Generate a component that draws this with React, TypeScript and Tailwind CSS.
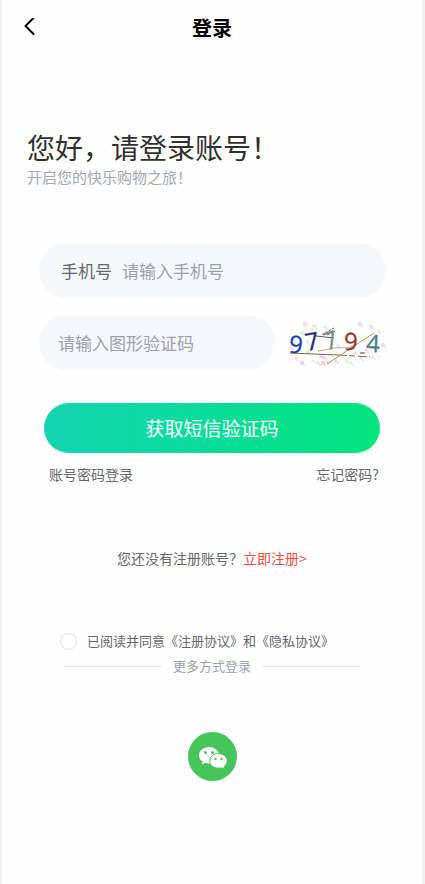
import { useState } from 'react';

const specks: [number, number, string][] = [
  [17, 4, '#f4b6e8'], [26, 6, '#f6b9ae'], [37, 7, '#b9dcc0'], [72, 4, '#edb4e6'], [83, 6, '#a9d3b0'],
  [91, 11, '#a5efa5'], [14, 13, '#c4eeb4'], [24, 9, '#d7f0a8'], [4, 11, '#dff2d6'], [95, 25, '#e6b8f2'],
  [29, 15, '#d6e6a2'], [44, 12, '#c8e8c8'], [57, 18, '#e3f3b5'], [19, 22, '#e4c8f5'], [50, 26, '#d9b6f0'],
  [64, 27, '#d5b7ef'], [78, 30, '#d2a5f0'], [67, 33, '#abdcbd'], [33, 36, '#dba6f0'], [36, 37, '#e9a9df'],
  [8, 38, '#e0c3b8'], [14, 43, '#d5b0ec'], [25, 41, '#c5f0c5'], [30, 43, '#dbaeef'], [35, 43, '#f5a9a4'],
  [39, 42, '#f3b5dc'], [48, 41, '#cfb5f1'], [59, 41, '#d7efb0'], [63, 43, '#dfe7a9'], [73, 38, '#e0b4ef'],
  [85, 37, '#d8f3ae'], [90, 36, '#dce5f8'], [3, 28, '#cdd8f8'], [20, 32, '#b8efa4'], [88, 19, '#c5eccd'],
];

function Captcha() {
  return (
    <svg viewBox="0 0 98 46" className="h-[46px] w-[98px]" role="img" aria-label="图形验证码">
      {specks.map(([x, y, color], i) => (
        <g key={i} fill={color} opacity="0.55">
          <circle cx={x} cy={y} r={i % 3 === 0 ? 2.2 : 1.5} />
          <circle cx={x + 2} cy={y + 2} r="1" />
        </g>
      ))}
      <g fill="none" strokeWidth="1">
        <path d="M2 33 50 35" stroke="#80604e" />
        <path d="M50 35 82 37" stroke="#8d6956" strokeDasharray="9 2 6 3" />
        <path d="M39 44 86 13" stroke="#b98f3e" />
        <path d="M30 31 47 28 66 27" stroke="#c6a88f" />
        <path d="M28 16 46 18" stroke="#4b5a95" />
        <path d="M37 13 46 8M39 15 47 11" stroke="#53658b" strokeDasharray="3 1" />
        <path d="M72 33h5" stroke="#aa6560" strokeWidth="1.5" />
      </g>
      <g fontFamily="Open Sans, Noto Sans, sans-serif" fontSize="24" strokeWidth="0.3">
        <text x="1" y="33" fill="#173fae" stroke="#173fae" transform="rotate(6 7 25)">9</text>
        <text x="17" y="30" fill="#242a78" stroke="#242a78" transform="rotate(-10 23 21)">7</text>
        <text x="36" y="29" fill="#7e8c75" stroke="#7e8c75" transform="rotate(-18 42 21)">7</text>
        <text x="56" y="30" fill="#963329" stroke="#963329" transform="rotate(2 61 22)">9</text>
        <text x="78" y="32" fill="#487f82" stroke="#487f82" transform="rotate(3 83 25)">4</text>
      </g>
    </svg>
  );
}

function WeChatIcon() {
  return (
    <svg viewBox="0 0 49 49" className="h-[49px] w-[49px]" aria-hidden="true">
      <path fill="#fff" d="M21 15c-5.500 0-10 3.700-10 8.400 0 2.700 1.500 5 3.800 6.500l-1 2.700 3.500-1.800c1.100.4 2.400.6 3.700.6 5.500 0 10-3.500 10-8S26.500 15 21 15Z" />
      <circle cx="17.500" cy="20.500" r="1.500" fill="#46c55b" />
      <circle cx="24.500" cy="20.500" r="1.500" fill="#46c55b" />
      <path fill="#fff" stroke="#46c55b" d="M30.500 21.500c-5 0-8.800 3.300-8.800 7.400 0 4.200 3.900 7.300 8.800 7.300 1.100 0 2-.1 3-.4l3.200 1.500-.8-2.600c2-1.400 3.300-3.400 3.300-5.800 0-4.100-3.800-7.400-8.700-7.400Z" />
      <circle cx="27.500" cy="27" r="1.200" fill="#46c55b" />
      <circle cx="33.500" cy="27" r="1.200" fill="#46c55b" />
    </svg>
  );
}

export default function App() {
  const [agreed, setAgreed] = useState(false);
  return (
    <div className="min-h-screen border-l-2 border-r-3 border-[#f0f0f0] bg-[#fefefe] font-['Noto_Sans_CJK_SC',sans-serif] text-[#66686c]">
      <header className="grid h-14 grid-cols-[1fr_auto_1fr] items-center px-5">
        <button type="button" aria-label="返回" className="flex h-8 w-6 items-center text-black">
          <svg viewBox="0 0 14 20" className="h-5 w-[14px]" fill="none" stroke="currentColor" strokeWidth="2" strokeLinecap="round" strokeLinejoin="round" aria-hidden="true">
            <path d="M11.500 0 3.500 8l8 8" />
          </svg>
        </button>
        <h1 className="text-xl font-bold text-black">登录</h1>
      </header>

      <main>
        <section className="px-[25px] pt-[71px]">
          <h2 className="text-[28px] leading-10 text-[#303030]">您好，请登录账号！</h2>
          <p className="text-[15px] leading-5 text-[#a2a7b5]">开启您的快乐购物之旅！</p>
        </section>

        <form className="pt-14" onSubmit={(e) => e.preventDefault()}>
          <div className="mr-9 ml-[37px] flex h-[55px] items-center gap-[10px] rounded-full bg-[#f6f7f9] px-[22px] text-[17px]">
            <label htmlFor="phone" className="shrink-0">手机号</label>
            <input id="phone" type="tel" placeholder="请输入手机号" className="min-w-0 flex-1 bg-transparent outline-none placeholder:text-[#9ca1ae]" />
          </div>
          <div className="mr-9 ml-[37px] mt-[17px] flex items-center gap-[13px]">
            <input type="text" aria-label="图形验证码" placeholder="请输入图形验证码" className="h-[55px] min-w-0 flex-1 rounded-full bg-[#f6f7f9] px-[19px] text-[17px] outline-none placeholder:text-[#9ca1ae]" />
            <button type="button" aria-label="刷新验证码" className="shrink-0">
              <Captcha />
            </button>
          </div>

          <div className="mx-[42px] mt-[33px]">
            <button type="submit" className="h-[50px] w-full rounded-full bg-linear-to-r from-[#13d4b2] to-[#03e57c] text-[19px] text-white">
              获取短信验证码
            </button>
          </div>
          <div className="mx-[42px] mt-[11px] flex justify-between pl-[5px] pr-px text-sm">
            <a href="#password-login">账号密码登录</a>
            <a href="#forgot">忘记密码?</a>
          </div>

          <p className="mt-16 text-center text-sm">
            您还没有注册账号？<a href="#register" className="text-[#fa4b43]">立即注册&gt;</a>
          </p>

          <div className="mt-[63px] ml-[58px] flex items-center gap-[10px] text-[13px] leading-5">
            <input id="agree" type="checkbox" checked={agreed} onChange={(e) => setAgreed(e.target.checked)} className="h-[17px] w-[17px] appearance-none rounded-full border border-[#dcdee3] bg-white checked:bg-[#07dc98]" />
            <label htmlFor="agree">已阅读并同意《注册协议》和《隐私协议》</label>
          </div>
        </form>

        <div className="mx-[62px] mt-[5px] flex items-center gap-[11px] text-[13px] leading-5 text-[#9ca1ae]">
          <span className="h-px flex-1 bg-[#e8e9ec]" />
          <span>更多方式登录</span>
          <span className="h-px flex-1 bg-[#e8e9ec]" />
        </div>

        <div className="mt-14 flex justify-center">
          <button type="button" aria-label="微信登录" className="rounded-full bg-[#46c55b]">
            <WeChatIcon />
          </button>
        </div>
      </main>
    </div>
  );
}
